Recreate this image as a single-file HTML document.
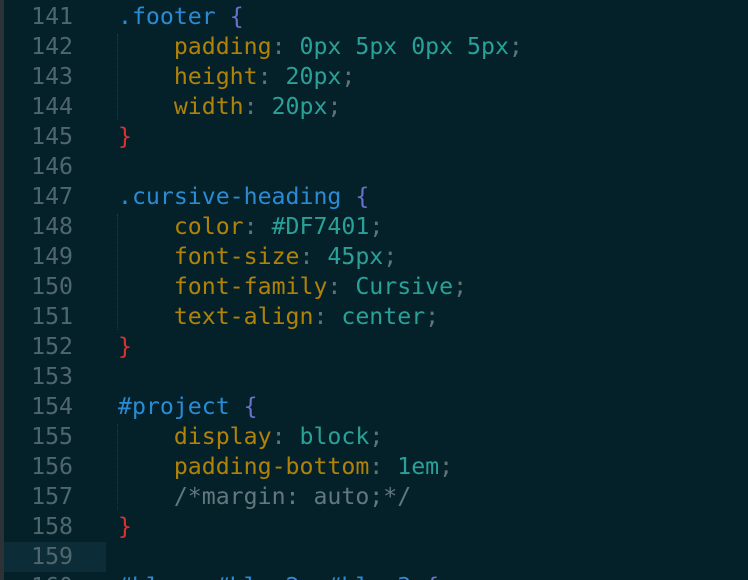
<!DOCTYPE html>
<html style="overflow:hidden;height:580px"><head><style>
body{margin:0;width:748px;height:580px;overflow:hidden;background:#04212a;font-family:"DejaVu Sans Mono","Liberation Mono",monospace;font-size:23.2px;position:relative;}
.strip{position:absolute;left:0;top:0;width:4px;height:580px;background:#2c3336;}
.hl{position:absolute;left:4px;top:542px;width:102px;height:30px;background:#0c2d37;}
.guide{position:absolute;left:117px;width:0;border-left:1px dotted #1f3c45;}
.ln{position:absolute;left:0;width:73px;text-align:right;color:#4f666e;line-height:30px;white-space:pre;}
.code{position:absolute;left:118px;color:#6c8088;line-height:30px;white-space:pre;}
.s{color:#2a8bd4}.b{color:#6b71c6}.p{color:#b08206}.v{color:#2aa198}.r{color:#dc322f}.c{color:#63777e}.u{color:#5f737b}
</style></head><body>
<div class="strip"></div>
<div class="hl"></div>
<div class="guide" style="top:34px;height:86px"></div>
<div class="guide" style="top:214px;height:116px"></div>
<div class="guide" style="top:424px;height:86px"></div>
<div class="ln" style="top:2px">141
142
143
144
145
146
147
148
149
150
151
152
153
154
155
156
157
158
159
160</div>
<div class="code" style="top:2px"><span class="s">.footer</span> <span class="b">{</span>
    <span class="p">padding</span><span class="u">:</span> <span class="v">0px 5px 0px 5px</span><span class="u">;</span>
    <span class="p">height</span><span class="u">:</span> <span class="v">20px</span><span class="u">;</span>
    <span class="p">width</span><span class="u">:</span> <span class="v">20px</span><span class="u">;</span>
<span class="r">}</span>

<span class="s">.cursive-heading</span> <span class="b">{</span>
    <span class="p">color</span><span class="u">:</span> <span class="v">#DF7401</span><span class="u">;</span>
    <span class="p">font-size</span><span class="u">:</span> <span class="v">45px</span><span class="u">;</span>
    <span class="p">font-family</span><span class="u">:</span> <span class="v">Cursive</span><span class="u">;</span>
    <span class="p">text-align</span><span class="u">:</span> <span class="v">center</span><span class="u">;</span>
<span class="r">}</span>

<span class="s">#project</span> <span class="b">{</span>
    <span class="p">display</span><span class="u">:</span> <span class="v">block</span><span class="u">;</span>
    <span class="p">padding-bottom</span><span class="u">:</span> <span class="v">1em</span><span class="u">;</span>
    <span class="c">/*margin: auto;*/</span>
<span class="r">}</span>

<span class="s">#blog, #blog2, #blog3</span> <span class="b">{</span></div>
</body></html>
